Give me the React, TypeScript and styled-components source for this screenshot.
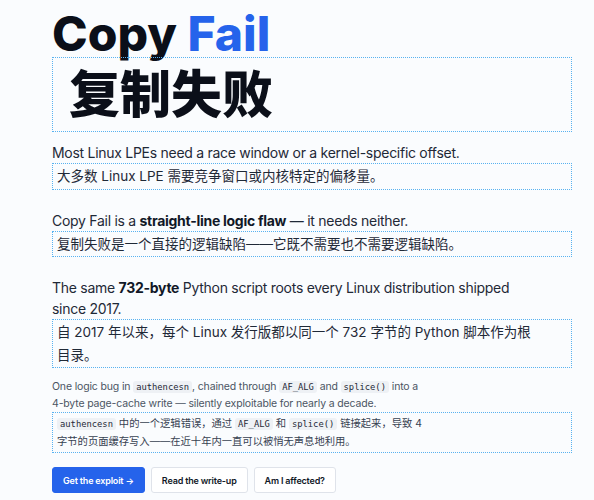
import React from "react";
import styled, { createGlobalStyle } from "styled-components";

const Global = createGlobalStyle`
  html, body { margin: 0; padding: 0; background: #fafcfe; }
  body { font-family: Inter, "Noto Sans CJK SC", sans-serif; color: #111827; }
`;

const Page = styled.main`
  width: 520px;
  padding: 10px 0 0 52px;
  display: flex;
  flex-direction: column;
`;

const Title = styled.h1`
  margin: 0;
  font-size: 48px;
  line-height: 48px;
  font-weight: 800;
  letter-spacing: 0;
  color: #0b0f19;
`;

const Accent = styled.span`
  color: #2563eb;
`;

const Trans = styled.div<{ $size?: number; $line?: number; $pad?: string; $color?: string }>`
  border: 1px dotted #58b2f0;
  padding: ${(p) => p.$pad ?? "1px 4px"};
  font-family: Inter, "Noto Sans CJK SC", sans-serif;
  font-size: ${(p) => p.$size ?? 13.5}px;
  line-height: ${(p) => p.$line ?? 22.5}px;
  color: ${(p) => p.$color ?? "#1f2937"};
`;

const TransText = styled.span<{ $max: number }>`
  display: block;
  max-width: ${(p) => p.$max}px;
`;

const TitleTrans = styled(Trans)`
  margin-top: -1px;
  font-weight: 800;
  color: #0b0f19;
`;

const Block = styled.section<{ $gap: number }>`
  margin-top: ${(p) => p.$gap}px;
  display: flex;
  flex-direction: column;
`;

const Lead = styled.p`
  margin: 0;
  max-width: 482px;
  font-size: 14px;
  line-height: 21px;
  letter-spacing: -0.02em;
  color: #1f2937;
  strong { font-weight: 700; color: #111827; }
`;

const Small = styled.p`
  margin: 0 0 1px;
  max-width: 376px;
  font-size: 10.5px;
  line-height: 15.5px;
  letter-spacing: -0.015em;
  color: #4b5563;
`;

const Code = styled.code`
  font-family: "DejaVu Sans Mono", "Liberation Mono", monospace;
  font-size: 8.8px;
  letter-spacing: 0;
  background: #eef1f5;
  border-radius: 3px;
  padding: 1px 3px;
  color: #1f2937;
`;

const Actions = styled.div`
  margin-top: 14px;
  display: flex;
  gap: 6px;
`;

const Button = styled.a<{ $primary?: boolean }>`
  display: inline-flex;
  align-items: center;
  justify-content: center;
  height: 26px;
  box-sizing: border-box;
  padding: 0 10px;
  border-radius: 3px;
  font-size: 9px;
  font-weight: 600;
  letter-spacing: -0.02em;
  text-decoration: none;
  background: ${(p) => (p.$primary ? "#2563eb" : "#ffffff")};
  color: ${(p) => (p.$primary ? "#ffffff" : "#111827")};
  border: 1px solid ${(p) => (p.$primary ? "#2563eb" : "#dfe3ea")};
`;

export default function App() {
  return (
    <>
      <Global />
      <Page>
        <Title>
          Copy <Accent>Fail</Accent>
        </Title>
        <TitleTrans $size={51} $line={69} $pad="2px 4px 2px 16px">复制失败</TitleTrans>

        <Block $gap={10}>
          <Lead>Most Linux LPEs need a race window or a kernel-specific offset.</Lead>
          <Trans>
            <TransText $max={478}>大多数 Linux LPE 需要竞争窗口或内核特定的偏移量。</TransText>
          </Trans>
        </Block>

        <Block $gap={20}>
          <Lead>
            Copy Fail is a <strong>straight-line logic flaw</strong> — it needs neither.
          </Lead>
          <Trans>
            <TransText $max={478}>复制失败是一个直接的逻辑缺陷——它既不需要也不需要逻辑缺陷。</TransText>
          </Trans>
        </Block>

        <Block $gap={20}>
          <Lead>
            The same <strong>732-byte</strong> Python script roots every Linux distribution shipped
            since 2017.
          </Lead>
          <Trans>
            <TransText $max={478}>
              自 2017 年以来，每个 Linux 发行版都以同一个 732 字节的 Python 脚本作为根目录。
            </TransText>
          </Trans>
        </Block>

        <Block $gap={11}>
          <Small>
            One logic bug in <Code>authencesn</Code>, chained through <Code>AF_ALG</Code> and{" "}
            <Code>splice()</Code> into a 4-byte page-cache write — silently exploitable for nearly a
            decade.
          </Small>
          <Trans $size={10.3} $line={17} $pad="2px 4px" $color="#374151">
            <TransText $max={372}>
              <Code>authencesn</Code> 中的一个逻辑错误，通过 <Code>AF_ALG</Code> 和{" "}
              <Code>splice()</Code> 链接起来，导致 4 字节的页面缓存写入——在近十年内一直可以被悄无声息地利用。
            </TransText>
          </Trans>
        </Block>

        <Actions>
          <Button $primary href="#">Get the exploit →</Button>
          <Button href="#">Read the write-up</Button>
          <Button href="#">Am I affected?</Button>
        </Actions>
      </Page>
    </>
  );
}
